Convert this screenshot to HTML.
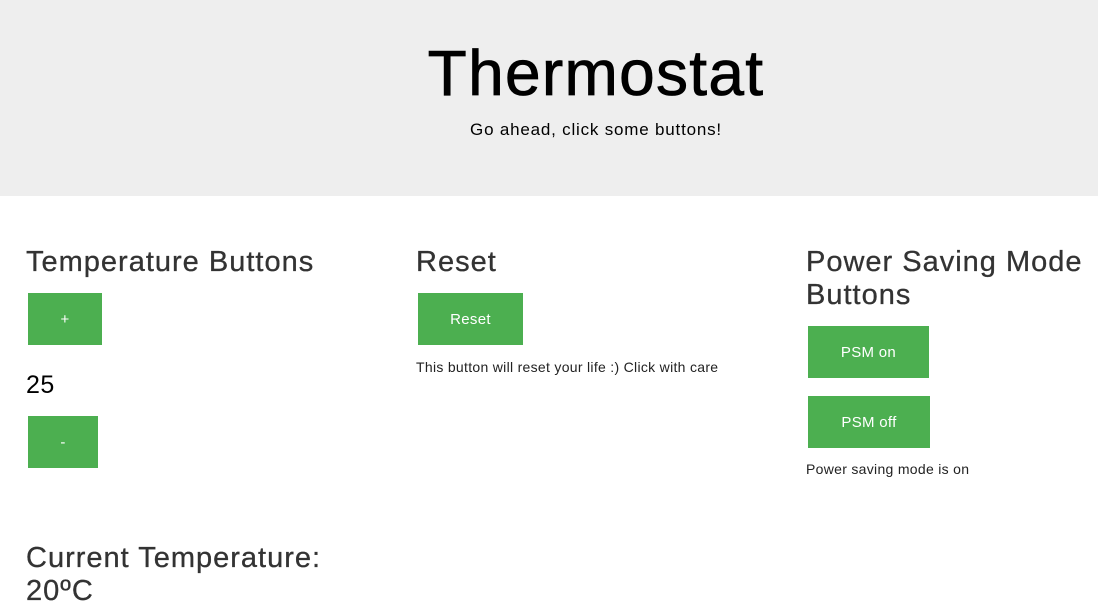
<!DOCTYPE html>
<html><head><style>
body{margin:0;width:1098px;height:613px;overflow:hidden;font-family:"Liberation Sans",Arial,sans-serif;background:#fff;position:relative}
.hdr{position:absolute;left:0;top:0;width:1098px;height:196px;background:#eeeeee}
.a{position:absolute;white-space:nowrap}
h1{position:absolute;margin:0;left:0;width:1192px;text-align:center;top:36px;font-size:64px;font-weight:normal;color:#000;letter-spacing:1.3px;-webkit-text-stroke:0.8px #000}
.sub{left:0;width:1192px;text-align:center;top:120px;font-size:17px;color:#000;letter-spacing:0.8px}
.h{font-size:29px;color:#333;line-height:33px;letter-spacing:1px;-webkit-text-stroke:0.3px #333}
.b{position:absolute;background:#4caf50;color:#fff;font-size:15px;display:flex;align-items:center;justify-content:center;height:52px;letter-spacing:0.3px}
.t{font-size:14px;color:#222;letter-spacing:0.3px}
</style></head><body>
<div class="hdr"></div>
<h1>Thermostat</h1>
<div class="a sub">Go ahead, click some buttons!</div>

<div class="a h" style="left:26px;top:246px">Temperature Buttons</div>
<div class="b" style="left:28px;top:293px;width:74px">+</div>
<div class="a" style="left:26px;top:371px;font-size:25px;color:#000;letter-spacing:0.5px">25</div>
<div class="b" style="left:28px;top:416px;width:70px">-</div>
<div class="a h" style="left:26px;top:542px">Current Temperature:<br>20ºC</div>

<div class="a h" style="left:416px;top:246px">Reset</div>
<div class="b" style="left:418px;top:293px;width:105px">Reset</div>
<div class="a t" style="left:416px;top:359px">This button will reset your life :) Click with care</div>

<div class="a h" style="left:806px;top:246px">Power Saving Mode<br>Buttons</div>
<div class="b" style="left:808px;top:326px;width:121px">PSM on</div>
<div class="b" style="left:808px;top:396px;width:122px">PSM off</div>
<div class="a t" style="left:806px;top:461px">Power saving mode is on</div>
</body></html>
